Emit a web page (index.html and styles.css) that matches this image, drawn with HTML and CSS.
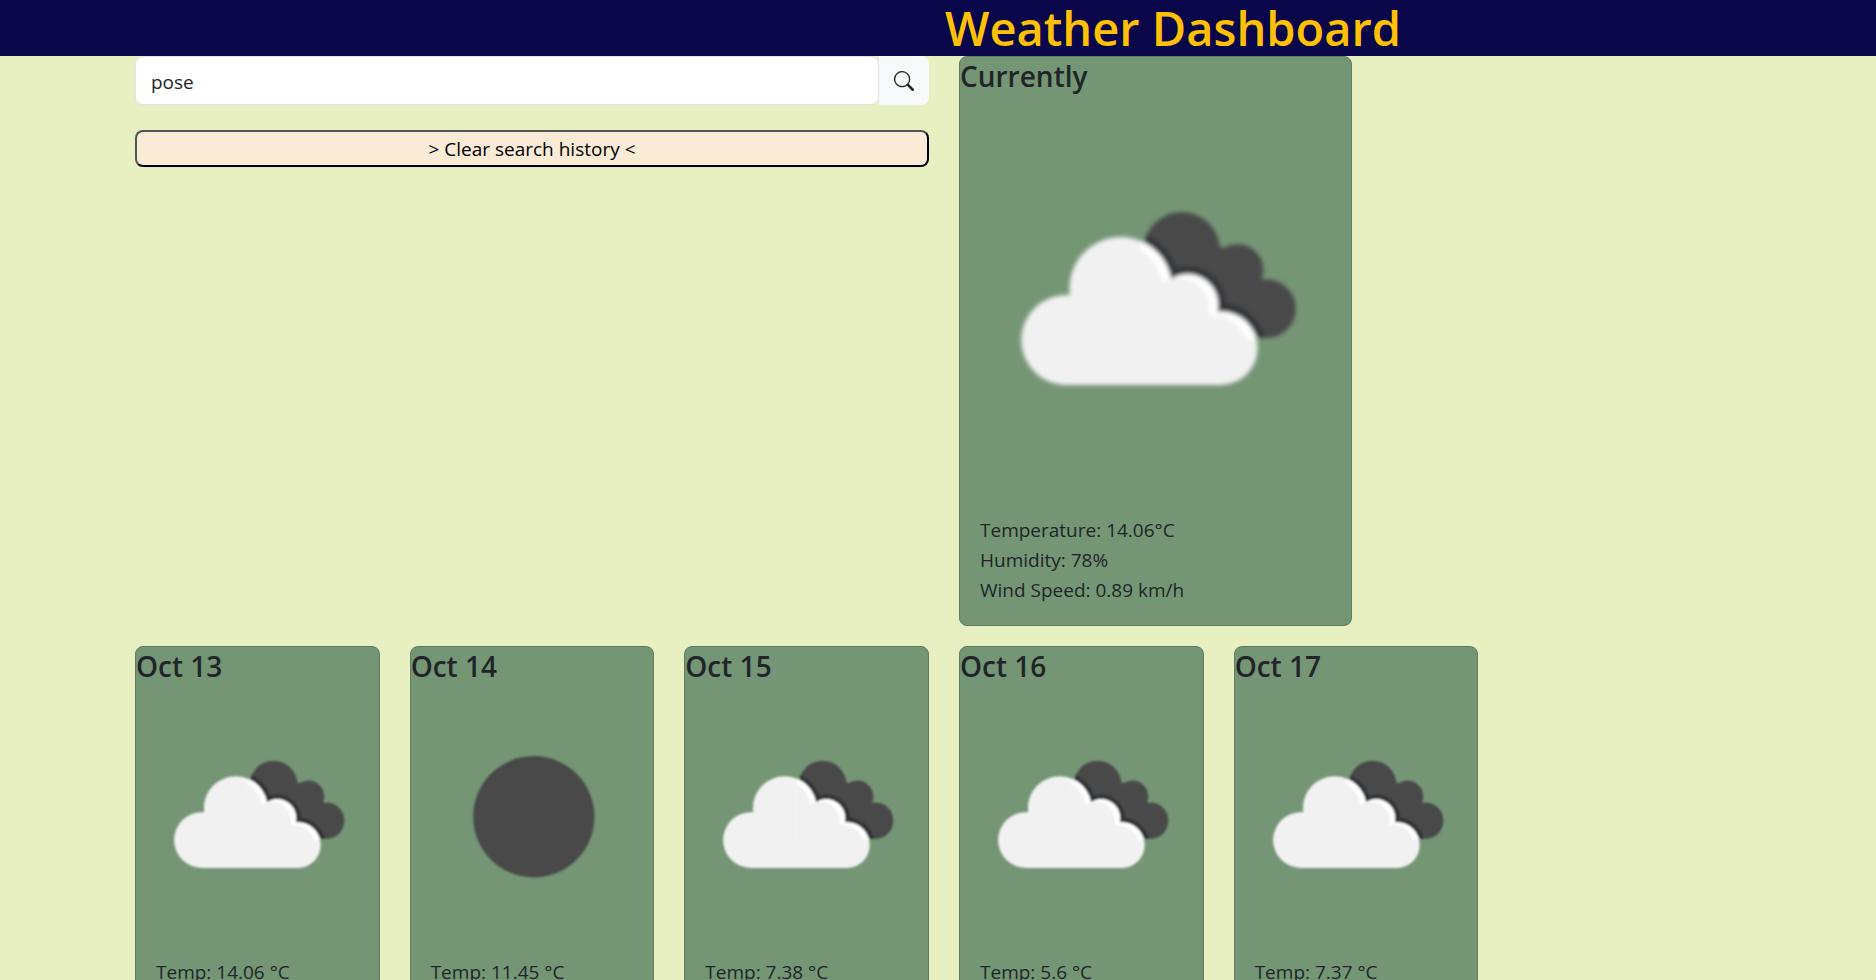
FILE: index.html
```html
<!DOCTYPE html>
<html lang="en">
<head>
<meta charset="utf-8">
<meta name="viewport" content="width=device-width, initial-scale=1">
<title>Weather Dashboard</title>
<link rel="stylesheet" href="styles.css">
</head>
<body>
<svg class="sprite" aria-hidden="true">
  <defs>
    <filter id="soft" x="-5%" y="-5%" width="110%" height="110%"><feGaussianBlur stdDeviation="0.5"/></filter>
    <g id="cloud-front">
      <circle cx="27.2" cy="60.6" r="11.5"/>
      <circle cx="41.1" cy="47.4" r="13.1"/>
      <circle cx="58.2" cy="51.6" r="7.8"/>
      <circle cx="66.7" cy="62.7" r="9.4"/>
      <path d="M27.2 49.1H30L41.5 47.2L58.2 46L66.7 56L67 72.1H27.2Z"/>
    </g>
    <clipPath id="clip-back">
      <circle cx="56.7" cy="37.7" r="9.8"/>
      <circle cx="71" cy="42.7" r="6.6"/>
      <circle cx="78.4" cy="52.6" r="7.5"/>
      <path d="M58 34L71.5 38.5L78.4 48V60.1H72L48 42Z"/>
    </clipPath>
    <clipPath id="clip-edge">
      <path d="M46 30H80V60.5H46Z"/>
    </clipPath>
    <symbol id="clouds" viewBox="0 0 100 100">
      <g filter="url(#soft)">
        <g clip-path="url(#clip-back)">
          <path d="M40 20H95V70H40Z" fill="#48484a"/>
          <use href="#cloud-front" fill="#333538" stroke="#333538" stroke-width="4"/>
        </g>
        <use href="#cloud-front" fill="#f1f1f1"/>
        <g clip-path="url(#clip-edge)">
          <use href="#cloud-front" fill="#ffffff"/>
          <use href="#cloud-front" fill="#f1f1f1" transform="translate(-2.2 1)"/>
        </g>
      </g>
    </symbol>
    <symbol id="clear-night" viewBox="0 0 100 100">
      <circle cx="50.6" cy="51" r="25" fill="#48484a" filter="url(#soft)"/>
    </symbol>
  </defs>
</svg>

<header class="page-header">
  <h1 class="page-title">Weather Dashboard</h1>
</header>

<main class="dashboard">
  <section class="search">
    <form class="search-form">
      <input class="search-input" type="text" value="pose" aria-label="City">
      <button class="search-button" type="button" aria-label="Search">
        <svg class="search-icon" viewBox="0 0 16 16" fill="currentColor" aria-hidden="true"><path d="M11.742 10.344a6.5 6.5 0 1 0-1.397 1.398h-.001c.03.04.062.078.098.115l3.85 3.85a1 1 0 0 0 1.415-1.414l-3.85-3.85a1.007 1.007 0 0 0-.115-.1zM12 6.5a5.5 5.5 0 1 1-11 0 5.5 5.5 0 0 1 11 0z"/></svg>
      </button>
    </form>
    <button class="clear-button" type="button">&gt; Clear search history &lt;</button>
  </section>

  <section class="current">
    <article class="card current-card">
      <h2 class="card-title">Currently</h2>
      <svg class="card-image" viewBox="0 0 100 100" role="img" aria-label="Broken clouds"><use href="#clouds"/></svg>
      <div class="card-body">
        <p class="card-text">Temperature: 14.06°C</p>
        <p class="card-text">Humidity: 78%</p>
        <p class="card-text">Wind Speed: 0.89 km/h</p>
      </div>
    </article>
  </section>

  <article class="card">
    <h2 class="card-title">Oct 13</h2>
    <svg class="card-image" viewBox="0 0 100 100" role="img" aria-label="Broken clouds"><use href="#clouds"/></svg>
    <div class="card-body"><p class="card-text">Temp: 14.06 °C</p></div>
  </article>
  <article class="card">
    <h2 class="card-title">Oct 14</h2>
    <svg class="card-image" viewBox="0 0 100 100" role="img" aria-label="Clear sky"><use href="#clear-night"/></svg>
    <div class="card-body"><p class="card-text">Temp: 11.45 °C</p></div>
  </article>
  <article class="card">
    <h2 class="card-title">Oct 15</h2>
    <svg class="card-image" viewBox="0 0 100 100" role="img" aria-label="Broken clouds"><use href="#clouds"/></svg>
    <div class="card-body"><p class="card-text">Temp: 7.38 °C</p></div>
  </article>
  <article class="card">
    <h2 class="card-title">Oct 16</h2>
    <svg class="card-image" viewBox="0 0 100 100" role="img" aria-label="Broken clouds"><use href="#clouds"/></svg>
    <div class="card-body"><p class="card-text">Temp: 5.6 °C</p></div>
  </article>
  <article class="card">
    <h2 class="card-title">Oct 17</h2>
    <svg class="card-image" viewBox="0 0 100 100" role="img" aria-label="Broken clouds"><use href="#clouds"/></svg>
    <div class="card-body"><p class="card-text">Temp: 7.37 °C</p></div>
  </article>
</main>
</body>
</html>
```

FILE: styles.css
```css
* {
  box-sizing: border-box;
}

html {
  scrollbar-width: none;
}

body {
  margin: 0;
  background: #e8f0c2;
  color: #212529;
  font-family: "Segoe UI", "Open Sans", "Noto Sans", sans-serif;
  font-size: 19px;
  line-height: 30px;
}

.sprite {
  position: absolute;
  width: 0;
  height: 0;
}

.page-header {
  padding-left: 50%;
  background: #090749;
}

.page-title {
  margin: 0;
  padding: 0 7px;
  color: #ffc107;
  font-size: 47px;
  font-weight: 550;
  line-height: 56px;
}

.dashboard {
  display: grid;
  grid-template-columns: repeat(6, minmax(0, 1fr));
  gap: 20px 30px;
  padding: 0 123px 0 135px;
}

.search,
.current {
  grid-column: span 3;
}

.search-form {
  display: flex;
  margin-bottom: 25px;
}

.search-input {
  flex: 1;
  min-width: 0;
  height: 49px;
  padding: 10px 15px 8px;
  border: 1px solid #dee2e6;
  border-radius: 8px;
  background: #fff;
  color: inherit;
  font: inherit;
}

.search-button {
  display: flex;
  align-items: center;
  justify-content: center;
  width: 50px;
  border: 0;
  border-radius: 0 8px 8px 0;
  background: #f8f9fa;
  color: #212529;
}

.search-icon {
  width: 20px;
  height: 20px;
}

.clear-button {
  display: block;
  width: 100%;
  padding: 2px 6px 1px;
  border: 2px outset #000;
  border-radius: 8px;
  background: #faebd7;
  color: #000;
  font: inherit;
}

.card {
  border: 1px solid #5f7d62;
  border-radius: 8px;
  background: #759675;
}

.current-card {
  max-width: 393px;
}

.card-title {
  margin: 0;
  padding: 1px 0 9px;
  font-size: 28px;
  font-weight: 550;
  line-height: 36px;
}

.card-image {
  display: block;
  width: 100%;
}

.card-body {
  padding: 21px 20px 20px;
}

.card-text {
  margin: 0;
}

@media (max-width: 900px) {
  .page-header {
    padding-left: 0;
    text-align: center;
  }

  .dashboard {
    grid-template-columns: repeat(2, minmax(0, 1fr));
    padding: 0 20px;
  }

  .search,
  .current {
    grid-column: span 2;
  }
}
```
